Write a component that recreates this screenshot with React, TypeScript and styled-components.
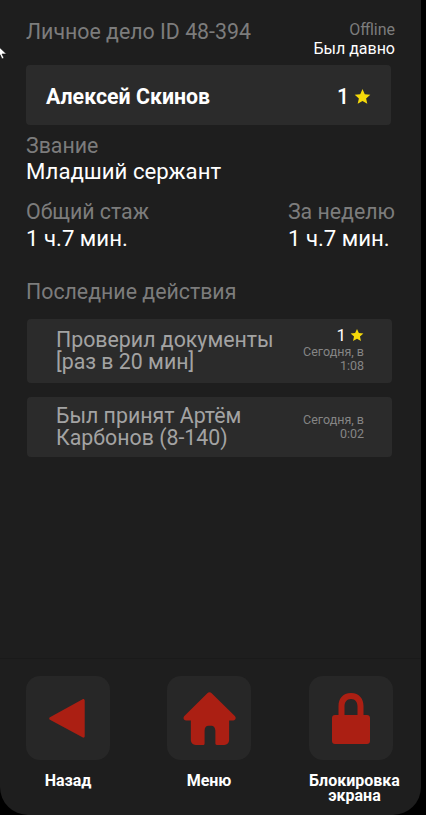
import styled, { createGlobalStyle } from "styled-components";

const GlobalStyle = createGlobalStyle`
  html, body {
    margin: 0;
    padding: 0;
    height: 815px;
    overflow: hidden;
    background: #000;
    font-family: Roboto, "Liberation Sans", sans-serif;
  }
`;

const Screen = styled.div`
  position: relative;
  width: 421px;
  height: 815px;
  display: flex;
  flex-direction: column;
  background: #1e1e1e;
  border-radius: 0 0 28px 28px;
  overflow: hidden;
`;

const Cursor = styled.svg`
  position: absolute;
  left: -3px;
  top: 45px;
`;

const Content = styled.main`
  flex: 1;
  padding: 20px 26px 0;
  display: flex;
  flex-direction: column;
`;

const Header = styled.header`
  display: flex;
  justify-content: space-between;
`;

const Title = styled.div`
  font-size: 21.33px;
  line-height: 24px;
  color: #7c7c7c;
`;

const Status = styled.div`
  text-align: right;
  font-size: 16px;
  line-height: 19px;
  color: #7c7c7c;
`;

const StatusValue = styled.div`
  color: #fff;
`;

const NameCard = styled.section`
  width: 365px;
  height: 60px;
  margin-top: 7px;
  padding: 3px 20px 0;
  box-sizing: border-box;
  display: flex;
  align-items: center;
  justify-content: space-between;
  background: #2b2b2b;
  border-radius: 4px;
`;

const Name = styled.div`
  font-size: 21.33px;
  font-weight: 700;
  color: #fff;
`;

const Rating = styled.div<{ $small?: boolean }>`
  display: flex;
  align-items: center;
  justify-content: flex-end;
  gap: ${({ $small }) => ($small ? "4px" : "5px")};
  font-size: ${({ $small }) => ($small ? "17px" : "21.33px")};
  font-weight: ${({ $small }) => ($small ? 400 : 500)};
  line-height: ${({ $small }) => ($small ? "16px" : "24px")};
  margin-bottom: ${({ $small }) => ($small ? "2px" : "0")};
  color: #fff;
`;

const Field = styled.div`
  display: flex;
  flex-direction: column;
  gap: 1px;
`;

const Label = styled.div`
  font-size: 21.33px;
  line-height: 24px;
  color: #7c7c7c;
`;

const Value = styled.div`
  font-size: 22.2px;
  line-height: 26px;
  color: #fff;
`;

const RankBlock = styled.div`
  margin-top: 9px;
`;

const StatsRow = styled.div`
  display: flex;
  justify-content: space-between;
  margin-top: 16px;
`;

const SectionTitle = styled.div`
  font-size: 21.33px;
  line-height: 24px;
  color: #7c7c7c;
  margin-top: 29px;
`;

const ActionList = styled.div`
  display: flex;
  flex-direction: column;
  gap: 14px;
  margin: 15px 0 0 1px;
`;

const ActionCard = styled.article<{ $height: number }>`
  width: 365px;
  height: ${({ $height }) => $height}px;
  box-sizing: border-box;
  padding: 0 28px 0 29px;
  display: flex;
  align-items: center;
  justify-content: space-between;
  background: #2b2b2b;
  border-radius: 4px;
`;

const ActionText = styled.div`
  font-size: 21.33px;
  line-height: 22px;
  color: #a3a3a3;
`;

const ActionMeta = styled.div<{ $lift?: boolean }>`
  width: 66px;
  text-align: right;
  margin-bottom: ${({ $lift }) => ($lift ? "2px" : "0")};
`;

const ActionTime = styled.div`
  font-size: 12.5px;
  line-height: 14px;
  color: #858585;
`;

const BottomBar = styled.nav`
  height: 157px;
  box-sizing: border-box;
  padding: 17px 0 0 22px;
  display: grid;
  grid-template-columns: 141px 142px 92px;
  align-items: start;
  border-top: 1px solid #1a1a1a;
`;

const NavItem = styled.div`
  display: flex;
  flex-direction: column;
  align-items: center;
  width: 92px;
`;

const NavButton = styled.button`
  width: 84px;
  height: 84px;
  padding: 0;
  border: none;
  border-radius: 14px;
  background: #272727;
  display: flex;
  align-items: center;
  justify-content: center;
`;

const NavLabel = styled.div<{ $shift?: number }>`
  width: 92px;
  margin: 13px 0 0 ${({ $shift }) => $shift ?? 0}px;
  font-size: 16px;
  line-height: 15px;
  font-weight: 700;
  text-align: center;
  color: #fff;
`;

const BackSvg = styled.svg`
  margin-right: 2px;
`;

const StarIcon = ({ size }: { size: number }) => (
  <svg width={size} height={size} viewBox="0 0 24 24" fill="#f5d90a">
    <path d="M12 1.500l3.200 7.200 7.800.8-5.900 5.200 1.700 7.700L12 18.400l-6.800 4 1.700-7.700L1 9.500l7.800-.8z" />
  </svg>
);

const BackIcon = () => (
  <BackSvg width="36" height="41" viewBox="0 0 38 42" fill="#ab1f13">
    <path d="M36 .5c1 0 1.700.7 1.700 1.700v37.600c0 1-.9 1.800-1.900 1.300L1 22.300c-1-.6-1-2 0-2.600L35.500.7c.2-.1.3-.2.500-.2z" />
  </BackSvg>
);

const HomeIcon = () => (
  <svg width="53" height="53" viewBox="0 0 54 54" fill="#ab1f13">
    <path d="M24.800 1.200c1.200-1.200 3.200-1.200 4.400 0l23.600 23.200c1.800 1.800.6 4.600-1.800 4.600h-4v20c0 2.600-2 5-5 5h-7.500c-1 0-1.500-.6-1.500-1.500V39.500c0-3-2-5-4-5h-3c-2.500 0-4 2-4 5v13c0 1-.5 1.500-1.500 1.500H13c-3 0-5-2.400-5-5V29H3.200C.8 29-.4 26.200 1.400 24.400z" />
  </svg>
);

const LockIcon = () => (
  <svg width="38" height="51" viewBox="0 0 38 51" fill="#ab1f13">
    <path d="M19 0C10.500 0 6.500 6 6.500 13v9H3c-1.800 0-3 1.200-3 3v23c0 1.800 1.200 3 3 3h32c1.800 0 3-1.200 3-3V25c0-1.800-1.200-3-3-3h-3.500v-9C31.500 6 27.500 0 19 0zm0 6c4.500 0 6.500 3.200 6.500 7.500V22h-13v-8.500C12.500 9.200 14.500 6 19 6z" />
  </svg>
);

export default function App() {
  return (
    <>
      <GlobalStyle />
      <Screen>
        <Content>
          <Header>
            <Title>Личное дело ID 48-394</Title>
            <Status>
              Offline
              <StatusValue>Был давно</StatusValue>
            </Status>
          </Header>

          <NameCard>
            <Name>Алексей Скинов</Name>
            <Rating>
              1 <StarIcon size={17} />
            </Rating>
          </NameCard>

          <RankBlock>
            <Label>Звание</Label>
            <Value>Младший сержант</Value>
          </RankBlock>

          <StatsRow>
            <Field>
              <Label>Общий стаж</Label>
              <Value>1 ч.7 мин.</Value>
            </Field>
            <Field>
              <Label>За неделю</Label>
              <Value>1 ч.7 мин.</Value>
            </Field>
          </StatsRow>

          <SectionTitle>Последние действия</SectionTitle>

          <ActionList>
            <ActionCard $height={64}>
              <ActionText>
                Проверил документы
                <br />
                [раз в 20 мин]
              </ActionText>
              <ActionMeta $lift>
                <Rating $small>
                  1 <StarIcon size={14} />
                </Rating>
                <ActionTime>Сегодня, в 1:08</ActionTime>
              </ActionMeta>
            </ActionCard>
            <ActionCard $height={60}>
              <ActionText>
                Был принят Артём
                <br />
                Карбонов (8-140)
              </ActionText>
              <ActionMeta>
                <ActionTime>Сегодня, в 0:02</ActionTime>
              </ActionMeta>
            </ActionCard>
          </ActionList>
        </Content>

        <BottomBar>
          <NavItem>
            <NavButton aria-label="Назад">
              <BackIcon />
            </NavButton>
            <NavLabel>Назад</NavLabel>
          </NavItem>
          <NavItem>
            <NavButton aria-label="Меню">
              <HomeIcon />
            </NavButton>
            <NavLabel>Меню</NavLabel>
          </NavItem>
          <NavItem>
            <NavButton aria-label="Блокировка экрана">
              <LockIcon />
            </NavButton>
            <NavLabel $shift={7}>Блокировка экрана</NavLabel>
          </NavItem>
        </BottomBar>

        <Cursor width="10" height="17" viewBox="0 0 10 17">
          <path d="M0 0v12l3-2.500L5 14l2-1-2-4h4.500z" fill="#fff" stroke="#000" strokeWidth="0.6" />
        </Cursor>
      </Screen>
    </>
  );
}
